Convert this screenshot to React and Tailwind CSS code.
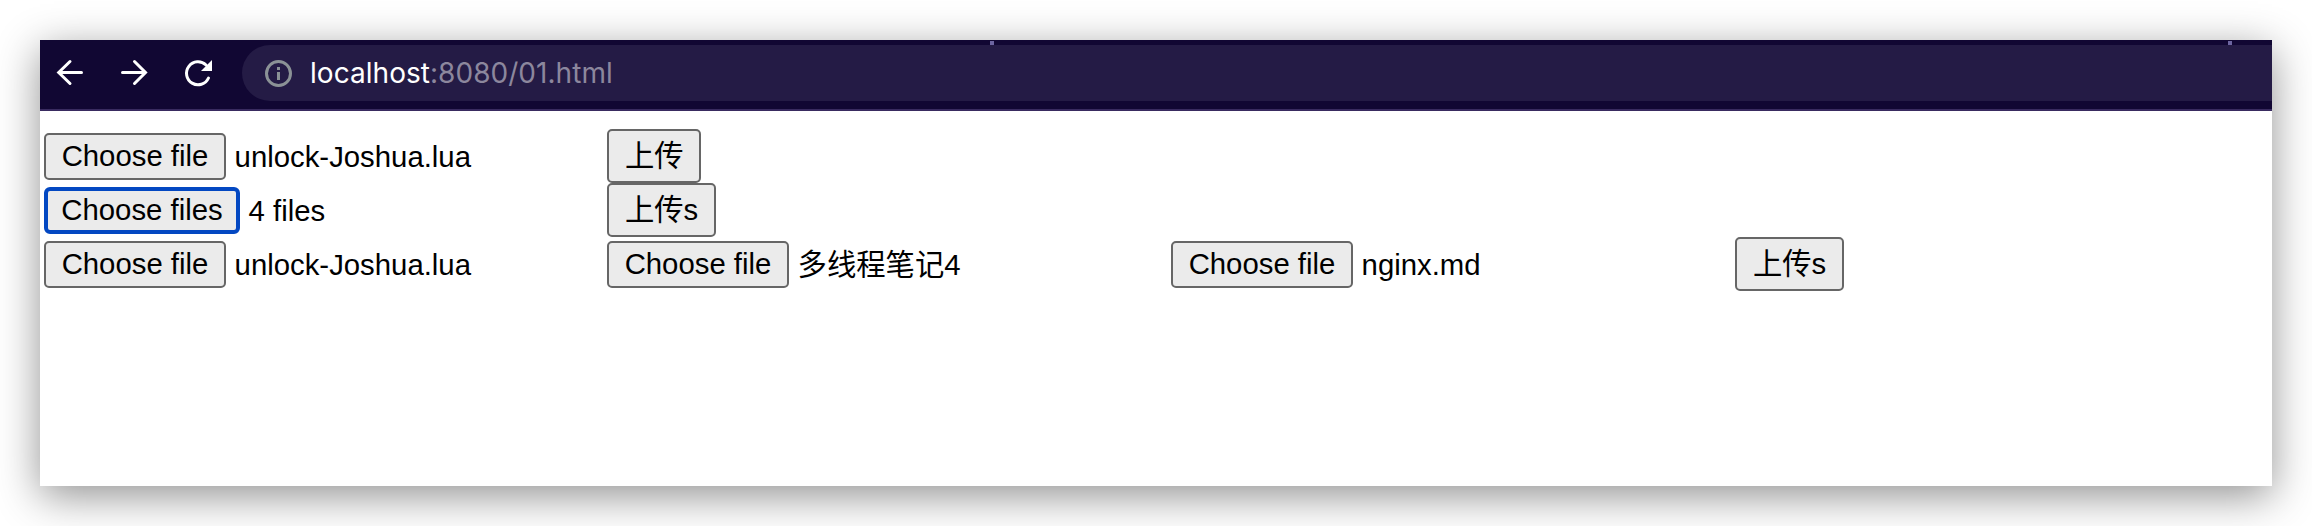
const FONT = "font-['Liberation_Sans','Noto_Sans_CJK_SC',sans-serif]";

function FilePicker({ label, name, focused = false }) {
  return (
    <div className="flex h-[54px] w-[564px] items-center first:w-[563px]">
      <button
        className={
          focused
            ? "h-[47px] w-[196px] shrink-0 rounded-[6px] border-4 border-[#0348c2] bg-[#ebebeb] leading-[37px] whitespace-nowrap"
            : "h-[47px] w-[182px] shrink-0 rounded-[5px] border-2 border-[#666] bg-[#ebebeb] leading-[41px] whitespace-nowrap"
        }
      >
        <span className="block pb-[2px]">{label}</span>
      </button>
      <span className="ml-[8.6px] leading-[45px] whitespace-nowrap">{name}</span>
    </div>
  );
}

function UploadButton({ children }) {
  return (
    <button className="h-[54px] rounded-[5px] border-2 border-[#666] bg-[#ebebeb] px-[15.9px] leading-[46px] whitespace-nowrap">
      {children}
    </button>
  );
}

function Toolbar() {
  return (
    <header className="relative flex h-[71px] border-b-2 border-[#392b60] bg-[#110733] pt-[5px]">
      <svg className="h-[56px] w-[202px] shrink-0" viewBox="40 45 202 56" fill="none" stroke="#fff" strokeWidth="3">
        <path strokeLinecap="round" d="M81.500 72.500H59M70 61.500L58.700 72.500L70 83.500" />
        <path strokeLinecap="round" d="M122.500 72.500H145M134.500 61.500L145.500 72.500L134.500 83.500" />
        <path strokeLinecap="round" d="M208.500 78A11.500 11.500 0 1 1 206 65" />
        <path d="M212 60V71H201Z" fill="#fff" stroke="none" />
      </svg>
      <div className="flex h-[56px] flex-1 items-center rounded-l-[28px] bg-[#241b45] pl-[23px]">
        <svg className="h-[27px] w-[27px] shrink-0" viewBox="0 0 27 27" fill="none">
          <circle cx="13.500" cy="13.500" r="12" stroke="#8b9296" strokeWidth="3" />
          <path d="M12 7H15V10H12ZM12 12H15V20H12Z" fill="#8b9296" />
        </svg>
        <p className="ml-[18px] pt-px font-[Inter,sans-serif] text-[28px] leading-[55px] tracking-[0.04px] text-[#8c879d]">
          <span className="text-white">localhost</span>:8080/01.html
        </p>
      </div>
      <i className="absolute top-px left-[950px] h-1 w-1 bg-[#6d65a0]" />
      <i className="absolute top-px left-[2188px] h-1 w-1 bg-[#6d65a0]" />
    </header>
  );
}

export default function App() {
  return (
    <div className="h-[526px] w-[2312px] overflow-hidden bg-white p-10">
      <main className="h-[446px] w-[2232px] bg-white shadow-[0_10px_40px_rgba(0,0,0,0.43)]">
        <Toolbar />
        <div className={`flex flex-col pt-[18px] pl-1 text-[29.333px] text-black ${FONT}`}>
          <div className="flex">
            <FilePicker label="Choose file" name="unlock-Joshua.lua" />
            <UploadButton>上传</UploadButton>
          </div>
          <div className="flex">
            <FilePicker label="Choose files" name="4 files" focused />
            <UploadButton>上传s</UploadButton>
          </div>
          <div className="flex">
            <FilePicker label="Choose file" name="unlock-Joshua.lua" />
            <FilePicker label="Choose file" name="多线程笔记4" />
            <FilePicker label="Choose file" name="nginx.md" />
            <UploadButton>上传s</UploadButton>
          </div>
        </div>
      </main>
    </div>
  );
}
